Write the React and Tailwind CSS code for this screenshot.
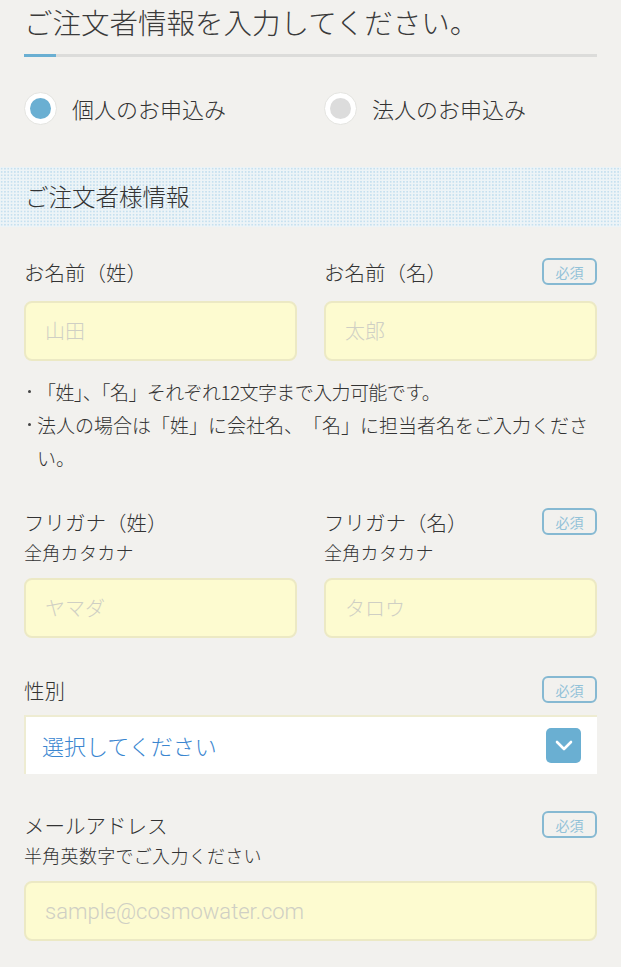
import React from 'react';

const font = { fontFamily: '"Noto Sans CJK JP", "Noto Sans", sans-serif' };

function Badge() {
  return (
    <span className="inline-flex h-[27px] w-[55px] items-center justify-center rounded-[6px] border-2 border-[#86b9d2] text-[14px] leading-none text-[#93c2d8]">
      必須
    </span>
  );
}

function Radio({ checked, label }) {
  return (
    <div className="flex items-center gap-[15px]">
      <span className="flex h-[33px] w-[33px] items-center justify-center rounded-full border border-[#e4e4e0] bg-white">
        <span className={checked ? 'h-[21px] w-[21px] rounded-full bg-[#6aafd2]' : 'h-[21px] w-[21px] rounded-full bg-[#dcdcdc]'} />
      </span>
      <span className="text-[22px] font-light text-[#333]">{label}</span>
    </div>
  );
}

function TextBox({ placeholder, latin }) {
  return (
    <div className="flex h-[60px] items-center rounded-[8px] border-2 border-[#ece9c4] bg-[#fdfbd0] px-[19px]">
      {latin ? (
        <span className='font-["Roboto"] text-[22px] font-light text-[#cfcfc4]'>{placeholder}</span>
      ) : (
        <span className="text-[20px] font-light text-[#cfcfc4]">{placeholder}</span>
      )}
    </div>
  );
}

function FieldHead({ label, sub, badge }) {
  return (
    <div className="flex items-start justify-between">
      <div>
        <div className="text-[20.5px] leading-[30px] font-light text-[#333]">{label}</div>
        {sub && <div className="mt-[1px] text-[18px] leading-[28px] font-light tracking-[0.3px] text-[#333]">{sub}</div>}
      </div>
      {badge && <div className="pt-[1px]"><Badge /></div>}
    </div>
  );
}

function Note({ children, trim }) {
  return (
    <li className="flex">
      <span className="flex h-[33px] w-[13px] shrink-0 items-center">
        <span className="ml-[4px] h-[3px] w-[3px] rounded-full bg-[#444]" />
      </span>
      <span className={trim ? '[text-spacing-trim:normal] tracking-[-0.6px]' : ''}>{children}</span>
    </li>
  );
}

export default function App() {
  return (
    <div style={font} className="min-h-[967px] w-[621px] bg-[#f2f1ee] text-[#333] [text-spacing-trim:space-all]">
      <div className="px-[24px]">
        <h1 className="pt-[1px] text-[28.5px] leading-[42px] font-light text-[#3a3a3a]">ご注文者情報を入力してください。</h1>
        <div className="mt-[11px] flex h-[3px] bg-[#dcdcda]">
          <div className="w-[32px] bg-[#6aafd2]" />
        </div>
        <div className="mt-[35px] grid grid-cols-2 gap-x-[27px]">
          <Radio checked label="個人のお申込み" />
          <Radio label="法人のお申込み" />
        </div>
      </div>

      <div className="mt-[42px] flex h-[60px] items-center bg-[#edf4f7] bg-[radial-gradient(circle,#c6e0ef_0.9px,transparent_1.2px)] bg-size-[3.3px_3.3px] px-[25px]">
        <h2 className="text-[23.5px] font-light text-[#333]">ご注文者様情報</h2>
      </div>

      <div className="px-[24px]">
        <div className="mt-[30px] grid grid-cols-2 gap-x-[27px]">
          <div>
            <FieldHead label="お名前（姓）" />
            <div className="mt-[14px]"><TextBox placeholder="山田" /></div>
          </div>
          <div>
            <FieldHead label="お名前（名）" badge />
            <div className="mt-[14px]"><TextBox placeholder="太郎" /></div>
          </div>
        </div>

        <ul className="mt-[14px] text-[19px] leading-[33px] font-light text-[#333]">
          <Note trim>「姓」、「名」それぞれ12文字まで入力可能です。</Note>
          <Note>法人の場合は「姓」に会社名、「名」に担当者名をご入力ください。</Note>
        </ul>

        <div className="mt-[33px] grid grid-cols-2 gap-x-[27px]">
          <div>
            <FieldHead label="フリガナ（姓）" sub="全角カタカナ" />
            <div className="mt-[12px]"><TextBox placeholder="ヤマダ" /></div>
          </div>
          <div>
            <FieldHead label="フリガナ（名）" sub="全角カタカナ" badge />
            <div className="mt-[12px]"><TextBox placeholder="タロウ" /></div>
          </div>
        </div>

        <div className="mt-[37px]">
          <FieldHead label="性別" badge />
          <div className="mt-[10px] flex h-[59px] items-center justify-between border-t-2 border-l-2 border-[#eeecd2] bg-white pl-[16px] pr-[16px]">
            <span className="text-[22px] font-light text-[#3a86d0]">選択してください</span>
            <span className="flex h-[35px] w-[35px] items-center justify-center rounded-[5px] bg-[#6aafd2]">
              <svg width="20" height="12" viewBox="0 0 20 12" fill="none">
                <path d="M3 2l7 7 7-7" stroke="white" strokeWidth="2.6" strokeLinecap="round" strokeLinejoin="round" />
              </svg>
            </span>
          </div>
        </div>

        <div className="mt-[36px]">
          <FieldHead label="メールアドレス" sub="半角英数字でご入力ください" badge />
          <div className="mt-[12px]"><TextBox placeholder="sample@cosmowater.com" latin /></div>
        </div>
      </div>
    </div>
  );
}
